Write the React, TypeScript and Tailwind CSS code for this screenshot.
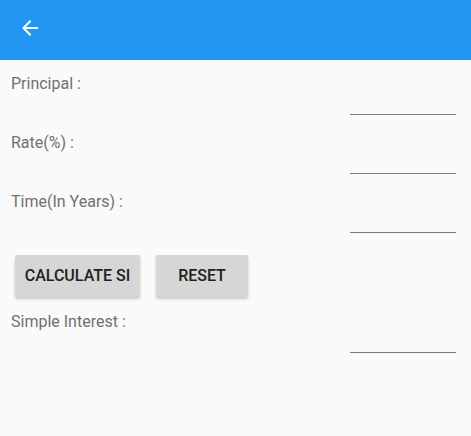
import React from 'react';

const FIELDS = ['Principal :', 'Rate(%) :', 'Time(In Years) :'];

function Field({ label, className = '' }: { label: string; className?: string }) {
  return (
    <div className={className}>
      <p className="pl-[11px] text-[16px] leading-[20px] text-[#707070]">{label}</p>
      <div className="flex justify-end pr-[15px]">
        <div className="h-[21px] w-[106px] border-b border-[#7a7a7a]" />
      </div>
    </div>
  );
}

export default function App() {
  return (
    <div
      className="min-h-[436px] w-full bg-[#fafafa]"
      style={{ fontFamily: 'Roboto, "Noto Sans", sans-serif' }}
    >
      {/* App bar */}
      <div className="flex h-[60px] items-center bg-[#2196f3] pb-[4px] pl-[18px]">
        <svg width="24" height="24" viewBox="0 0 24 24" fill="#ffffff">
          <path d="M20 11H7.83l5.59-5.59L12 4l-8 8 8 8 1.41-1.41L7.83 13H20v-2z" />
        </svg>
      </div>

      <div className="pt-[14px]">
        {FIELDS.map((f, i) => (
          <Field key={f} label={f} className={i > 0 ? 'mt-[18px]' : ''} />
        ))}

        {/* Buttons */}
        <div className="mt-[22px] flex gap-[16px] pl-[15px]">
          <button
            type="button"
            className="h-[42px] w-[125px] rounded-[2px] bg-[#d6d6d6] text-[16px] font-medium uppercase text-[#212121] shadow-[0_2px_3px_rgba(0,0,0,0.2)]"
          >
            Calculate SI
          </button>
          <button
            type="button"
            className="h-[42px] w-[92px] rounded-[2px] bg-[#d6d6d6] text-[16px] font-medium uppercase text-[#212121] shadow-[0_2px_3px_rgba(0,0,0,0.2)]"
          >
            Reset
          </button>
        </div>

        <Field label="Simple Interest :" className="mt-[15px]" />
      </div>
    </div>
  );
}
